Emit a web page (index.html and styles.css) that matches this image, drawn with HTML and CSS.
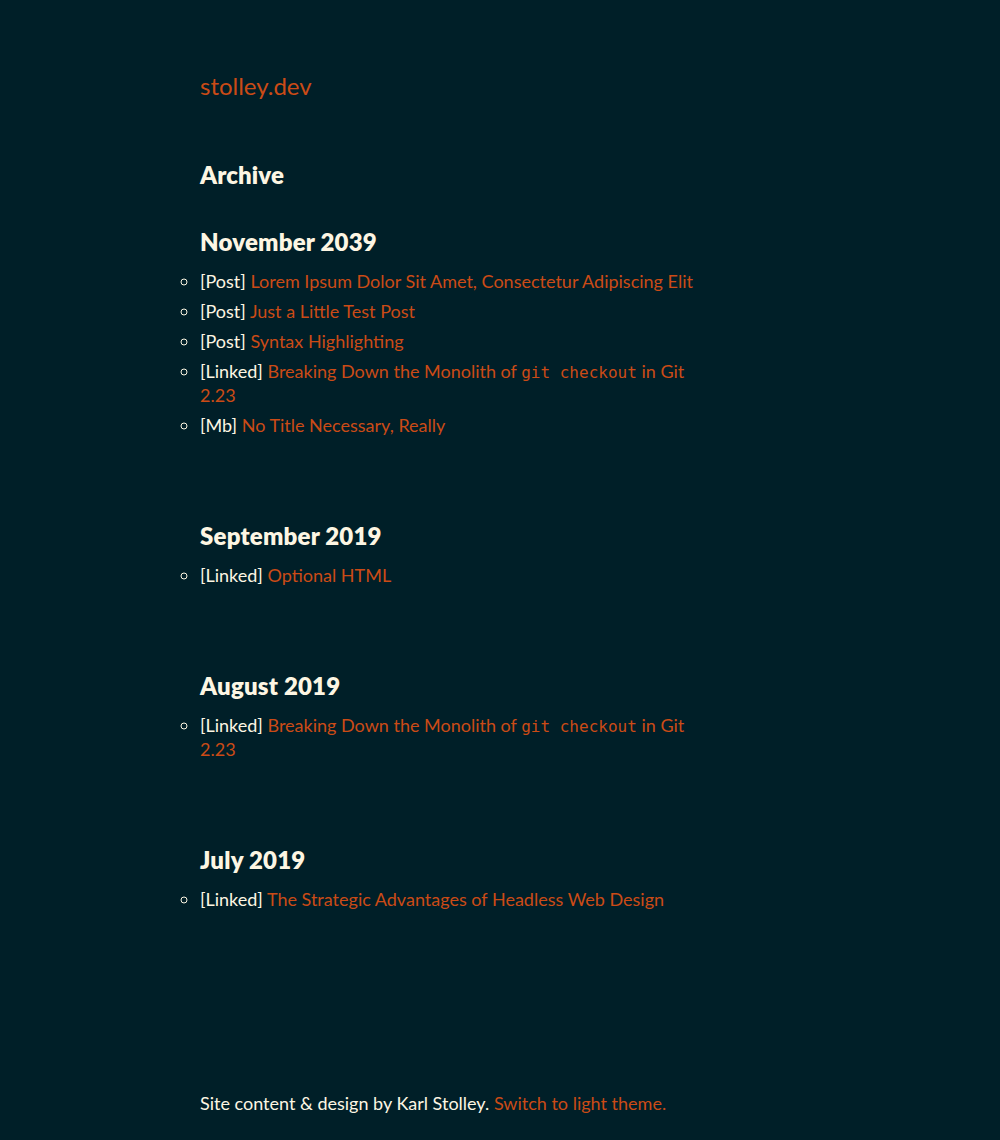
FILE: index.html
```html
<!DOCTYPE html>
<html lang="en">
<head>
<meta charset="utf-8">
<title>Archive — stolley.dev</title>
<link rel="stylesheet" href="styles.css">
</head>
<body>
<div class="page">
  <header class="site-header">
    <a class="site-title" href="#">stolley.dev</a>
  </header>
  <main>
    <h1 class="page-title">Archive</h1>
    <section class="month">
      <h2 class="month-title">November 2039</h2>
      <ul class="entries">
        <li>[Post] <a href="#">Lorem Ipsum Dolor Sit Amet, Consectetur Adipiscing Elit</a></li>
        <li>[Post] <a href="#">Just a Little Test Post</a></li>
        <li>[Post] <a href="#">Syntax Highlighting</a></li>
        <li>[Linked] <a href="#">Breaking Down the Monolith of <code>git checkout</code> in Git 2.23</a></li>
        <li>[Mb] <a href="#">No Title Necessary, Really</a></li>
      </ul>
    </section>
    <section class="month">
      <h2 class="month-title">September 2019</h2>
      <ul class="entries">
        <li>[Linked] <a href="#">Optional HTML</a></li>
      </ul>
    </section>
    <section class="month">
      <h2 class="month-title">August 2019</h2>
      <ul class="entries">
        <li>[Linked] <a href="#">Breaking Down the Monolith of <code>git checkout</code> in Git 2.23</a></li>
      </ul>
    </section>
    <section class="month">
      <h2 class="month-title">July 2019</h2>
      <ul class="entries">
        <li>[Linked] <a href="#">The Strategic Advantages of Headless Web Design</a></li>
      </ul>
    </section>
  </main>
  <footer class="site-footer">
    Site content &amp; design by Karl Stolley. <a href="#">Switch to light theme.</a>
  </footer>
</div>
</body>
</html>
```

FILE: styles.css
```css
html, body {
  margin: 0;
  padding: 0;
  background: #001f28;
}
body {
  color: #fdf6e3;
  font-family: Lato, "Liberation Sans", sans-serif;
  font-size: 18px;
  line-height: 24px;
}
a {
  color: #cb4b16;
  text-decoration: none;
}
.page {
  width: 500px;
  padding: 71px 0 24px 200px;
}
.site-title {
  display: block;
  font-size: 24px;
  line-height: 30px;
}
.page-title {
  margin: 59px 0 0;
  font-size: 24px;
  line-height: 30px;
  font-weight: 800;
  letter-spacing: 0.1px;
}
.month {
  margin-top: 37px;
}
.month + .month {
  margin-top: 84px;
}
.month-title {
  margin: 0 0 12px;
  font-size: 24px;
  line-height: 30px;
  font-weight: 800;
  letter-spacing: 0.2px;
}
.entries {
  margin: 0;
  padding: 0;
  list-style: circle outside;
}
.entries li + li {
  margin-top: 6px;
}
code {
  font-family: "DejaVu Sans Mono", monospace;
  font-size: 16px;
  line-height: 1;
}
.site-footer {
  margin-top: 180px;
}
```
